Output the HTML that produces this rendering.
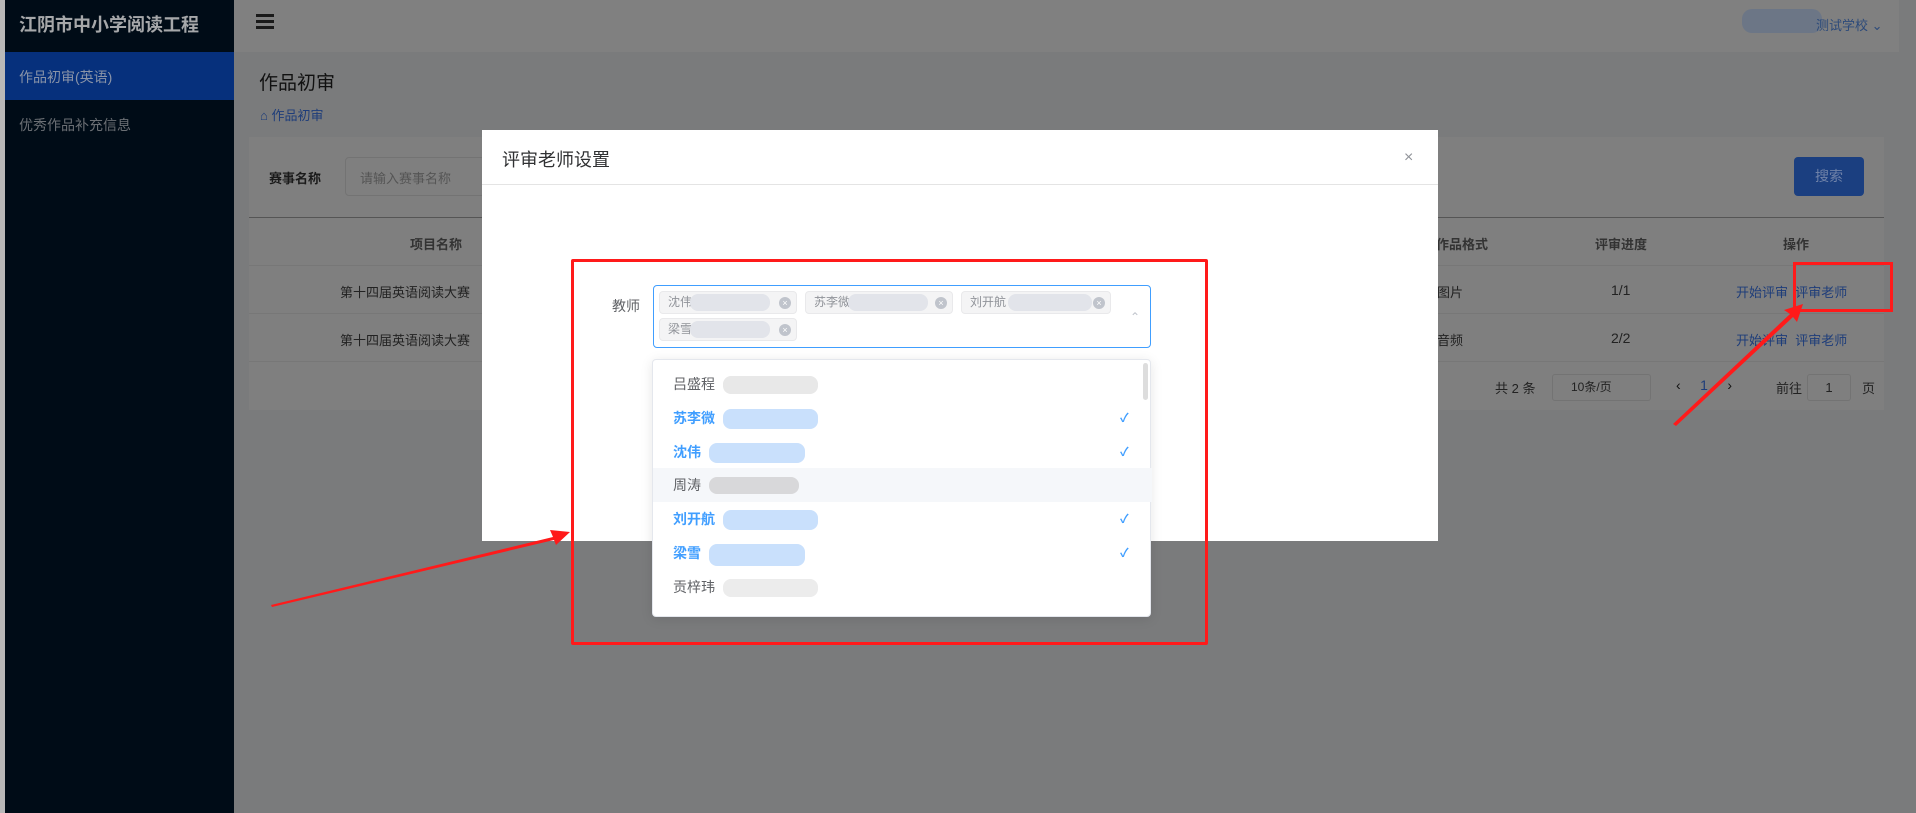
<!DOCTYPE html>
<html><head><meta charset="utf-8"><style>
*{margin:0;padding:0;box-sizing:border-box}
body{width:1916px;height:813px;overflow:hidden;position:relative;background:#7a7b7c;font-family:"Liberation Sans","Noto Sans CJK SC",sans-serif;font-size:13px;color:#333}
.a{position:absolute}
.side{left:0;top:0;width:234px;height:813px;background:#000c17;border-left:5px solid #b8b8b8}
.hdr{left:234px;top:0;width:1665px;height:52px;background:#808080}
.card{left:249px;top:137px;width:1635px;height:273px;background:#7f7f7f}
.t{white-space:nowrap}
.modal{left:482px;top:130px;width:956px;height:411px;background:#fff}
.tag{position:absolute;height:23px;background:#f4f4f5;border:1px solid #e9e9eb;border-radius:4px;font-size:12px;color:#909399;line-height:21px;padding-left:8px}
.tag i{position:absolute;right:5px;top:5px;width:12px;height:12px;border-radius:6px;background:#c0c4cc;color:#fff;font-size:9px;line-height:12px;text-align:center;font-style:normal}
.blur{position:absolute;border-radius:8px}
.it{position:absolute;left:0;width:499px;height:34px;line-height:34px;padding-left:20px;font-size:14px;color:#606266}
.it.s{color:#409eff;font-weight:bold}
.ck{position:absolute;left:467px;color:#409eff;font-size:12px}
</style></head><body>
<div class="a side"></div>
<div class="a t" style="left:19px;top:11px;color:#a6a8aa;font-size:18px;font-weight:bold">江阴市中小学阅读工程</div>
<div class="a" style="left:5px;top:52px;width:229px;height:48px;background:#06307c"></div>
<div class="a t" style="left:19px;top:67px;color:#8a94a8;font-size:14px">作品初审(英语)</div>
<div class="a t" style="left:19px;top:115px;color:#6b6f74;font-size:14px">优秀作品补充信息</div>
<div class="a hdr"></div>
<div class="a" style="left:256px;top:14px;width:18px;height:3px;background:#1a1a1a;box-shadow:0 6px 0 #1a1a1a,0 12px 0 #1a1a1a"></div>
<div class="a" style="left:1742px;top:9px;width:80px;height:24px;background:#5f6f8a;border-radius:10px;opacity:.6"></div>
<div class="a t" style="left:1816px;top:15px;color:#2c4a7a;font-size:13px">测试学校 ⌄</div>
<div class="a t" style="left:259px;top:68px;color:#111;font-size:19px">作品初审</div>
<div class="a t" style="left:260px;top:105px;color:#1e3d7a;font-size:13px">⌂ 作品初审</div>
<div class="a card"></div>
<div class="a t" style="left:269px;top:168px;color:#1a1a1a;font-size:13px;font-weight:bold">赛事名称</div>
<div class="a" style="left:345px;top:157px;width:140px;height:39px;border:1px solid #737373;border-radius:4px"></div>
<div class="a t" style="left:360px;top:168px;color:#555;font-size:13px">请输入赛事名称</div>
<div class="a" style="left:1794px;top:157px;width:70px;height:39px;background:#1b3f80;border-radius:4px;color:#6f82a8;font-size:14px;text-align:center;line-height:39px">搜索</div>
<div class="a" style="left:249px;top:217px;width:1635px;height:1px;background:#555"></div>
<div class="a" style="left:249px;top:265px;width:1635px;height:1px;background:#777"></div>
<div class="a" style="left:249px;top:313px;width:1635px;height:1px;background:#777"></div>
<div class="a" style="left:249px;top:361px;width:1635px;height:1px;background:#777"></div>
<div class="a t" style="left:410px;top:234px;color:#333;font-weight:bold">项目名称</div>
<div class="a t" style="left:1436px;top:234px;color:#333;font-weight:bold">作品格式</div>
<div class="a t" style="left:1595px;top:234px;color:#333;font-weight:bold">评审进度</div>
<div class="a t" style="left:1783px;top:234px;color:#333;font-weight:bold">操作</div>
<div class="a t" style="left:340px;top:282px;color:#222">第十四届英语阅读大赛</div>
<div class="a t" style="left:340px;top:330px;color:#222">第十四届英语阅读大赛</div>
<div class="a t" style="left:1437px;top:282px;color:#222">图片</div>
<div class="a t" style="left:1437px;top:330px;color:#222">音频</div>
<div class="a t" style="left:1611px;top:282px;color:#222;font-size:14px">1/1</div>
<div class="a t" style="left:1611px;top:330px;color:#222;font-size:14px">2/2</div>
<div class="a t" style="left:1736px;top:282px;color:#1e3d7a">开始评审&nbsp; 评审老师</div>
<div class="a t" style="left:1736px;top:330px;color:#1e3d7a">开始评审&nbsp; 评审老师</div>
<div class="a t" style="left:1495px;top:378px;color:#222">共 2 条</div>
<div class="a" style="left:1552px;top:374px;width:99px;height:27px;border:1px solid #737373;border-radius:3px;color:#222;font-size:12px;line-height:25px;padding-left:18px">10条/页</div>
<div class="a t" style="left:1676px;top:377px;color:#111;font-size:14px">‹&nbsp;&nbsp;&nbsp;&nbsp;&nbsp;<span style="color:#1e3d7a">1</span>&nbsp;&nbsp;&nbsp;&nbsp;&nbsp;›</div>
<div class="a t" style="left:1776px;top:378px;color:#222">前往</div>
<div class="a" style="left:1807px;top:374px;width:44px;height:27px;border:1px solid #737373;border-radius:3px;text-align:center;line-height:25px;color:#222">1</div>
<div class="a t" style="left:1862px;top:378px;color:#222">页</div>

<div class="a modal">
 <div class="a t" style="left:20px;top:16px;font-size:18px;color:#303133">评审老师设置</div>
 <div class="a" style="left:922px;top:19px;font-size:16px;color:#909399">×</div>
 <div class="a" style="left:0;top:54px;width:956px;height:1px;background:#e4e4e4"></div>
</div>
<div class="a t" style="left:612px;top:296px;font-size:14px;color:#606266">教师</div>
<div class="a" style="left:653px;top:285px;width:498px;height:63px;border:1px solid #409eff;border-radius:4px;background:#fff">
 <div class="tag" style="left:5px;top:5px;width:138px">沈伟<div class="blur" style="left:30px;top:2px;width:80px;height:17px;background:#e2e4ea"></div><i>×</i></div>
 <div class="tag" style="left:151px;top:5px;width:148px">苏李微<div class="blur" style="left:42px;top:2px;width:80px;height:17px;background:#e2e4ea"></div><i>×</i></div>
 <div class="tag" style="left:307px;top:5px;width:150px">刘开航<div class="blur" style="left:46px;top:2px;width:84px;height:17px;background:#e2e4ea"></div><i>×</i></div>
 <div class="tag" style="left:5px;top:32px;width:138px">梁雪<div class="blur" style="left:30px;top:2px;width:80px;height:17px;background:#e2e4ea"></div><i>×</i></div>
 <div class="a" style="left:476px;top:24px;color:#c0c4cc;font-size:12px">⌃</div>
</div>
<div class="a" style="left:652px;top:359px;width:499px;height:258px;background:#fff;border:1px solid #e4e7ed;border-radius:4px;box-shadow:0 2px 12px rgba(0,0,0,.1)">
 <div class="a" style="left:490px;top:3px;width:5px;height:37px;background:#ddd;border-radius:3px"></div>
 <div class="it" style="top:7px">吕盛程<div class="blur" style="left:70px;top:9px;width:95px;height:18px;background:#e8e8e8"></div></div>
 <div class="it s" style="top:41px">苏李微<div class="blur" style="left:70px;top:8px;width:95px;height:20px;background:#c9e0fc"></div><span class="ck">✓</span></div>
 <div class="it s" style="top:75px">沈伟<div class="blur" style="left:56px;top:8px;width:96px;height:20px;background:#c9e0fc"></div><span class="ck">✓</span></div>
 <div class="it" style="top:108px;background:#f5f7fa">周涛<div class="blur" style="left:56px;top:9px;width:90px;height:17px;background:#d8d8da"></div></div>
 <div class="it s" style="top:142px">刘开航<div class="blur" style="left:70px;top:8px;width:95px;height:20px;background:#c9e0fc"></div><span class="ck">✓</span></div>
 <div class="it s" style="top:176px">梁雪<div class="blur" style="left:56px;top:8px;width:96px;height:22px;background:#c9e0fc"></div><span class="ck">✓</span></div>
 <div class="it" style="top:210px">贡梓玮<div class="blur" style="left:70px;top:9px;width:95px;height:18px;background:#ececec"></div></div>
</div>
<div class="a" style="left:571px;top:259px;width:637px;height:386px;border:3px solid #ff1a1a;border-radius:2px"></div>
<div class="a" style="left:1793px;top:262px;width:100px;height:50px;border:3px solid #ff1a1a"></div>
<svg class="a" style="left:0;top:0" width="1916" height="813">
 <polygon points="271,605 553,537 550,530 570,532 556,545 554,540 272,607" fill="#ff1a1a"/>
 <polygon points="1673,424 1790,314 1784,310 1803,304 1797,322 1793,317 1676,426" fill="#ff1a1a"/>
</svg>
</body></html>
